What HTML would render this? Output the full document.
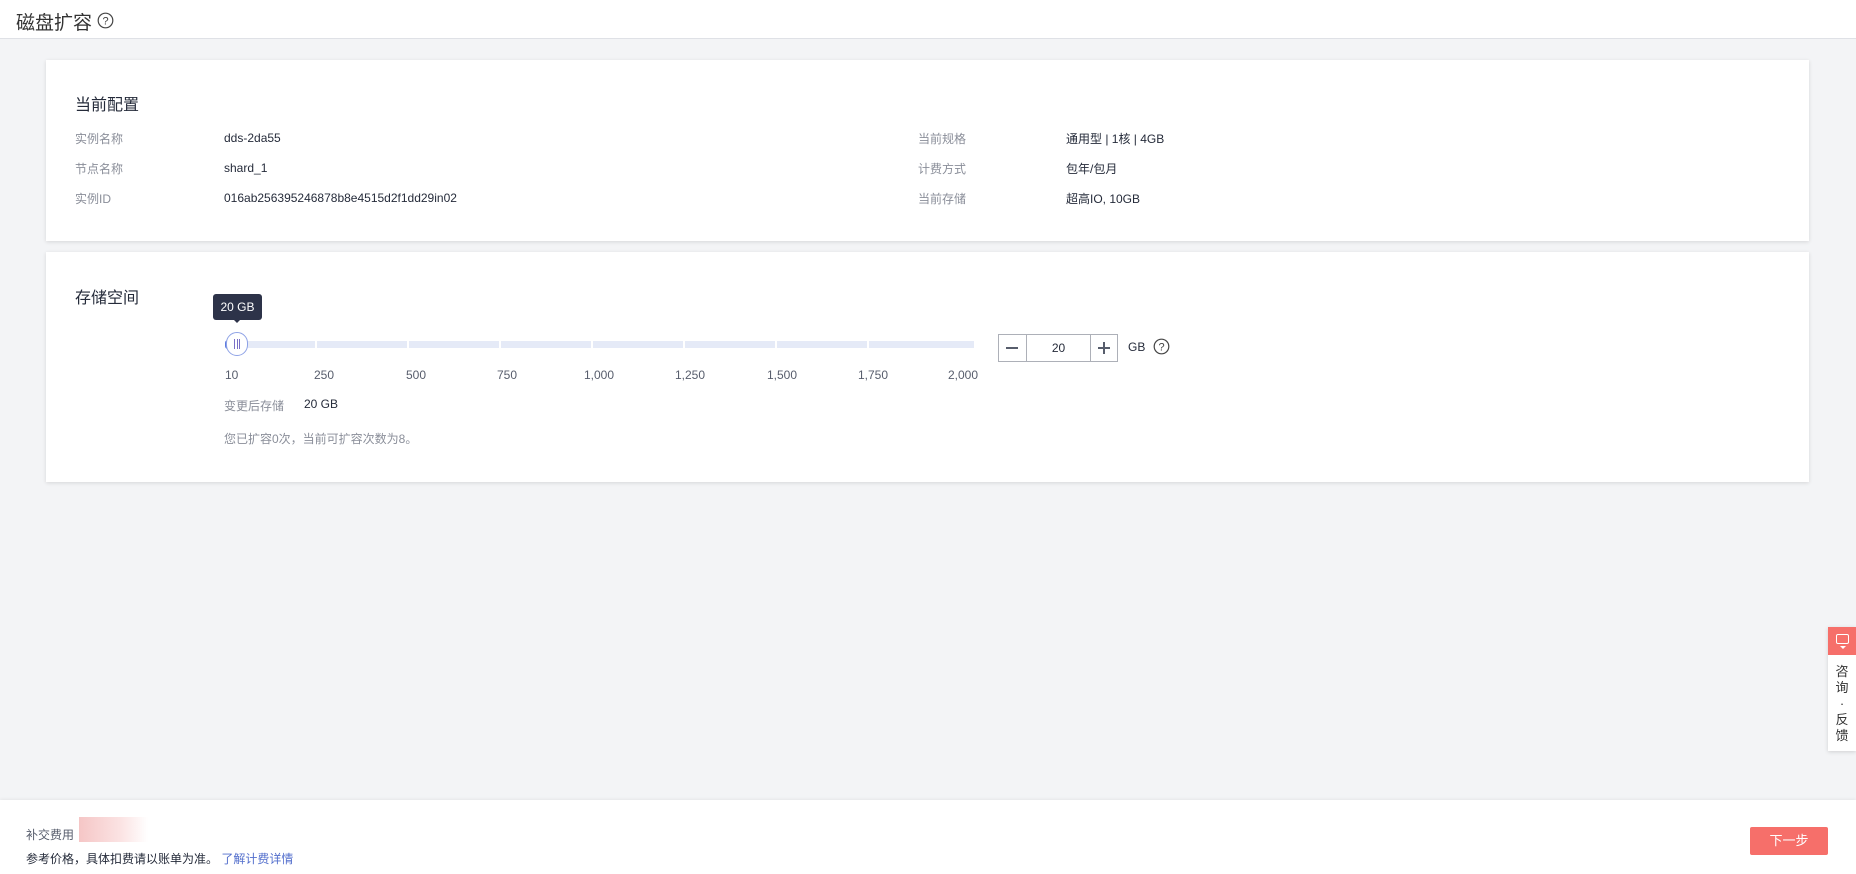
<!DOCTYPE html>
<html><head><meta charset="utf-8"><style>
*{margin:0;padding:0;box-sizing:border-box}
body{width:1856px;height:874px;background:#f3f4f6;font-family:"Liberation Sans","Noto Sans CJK SC",sans-serif;position:relative;overflow:hidden;color:#252b3a}
.a{position:absolute;white-space:nowrap}
.hdr{position:absolute;left:0;top:0;width:1856px;height:39px;background:#fff;border-bottom:1px solid #dfe1e6}
.card{position:absolute;left:46px;width:1763px;background:#fff;box-shadow:0 1px 4px rgba(0,0,0,.12)}
.lb{font-size:12px;color:#8a8e99}
.v{font-size:12px;color:#252b3a}
.tick{font-size:12px;color:#575d6c;top:368px}
.seg{position:absolute;top:341px;height:7px;background:#e5eaf7}
</style></head><body>
<div class="hdr"></div>
<div class="a" style="left:16px;top:8px;font-size:19px;color:#333">磁盘扩容</div>
<svg class="a" style="left:97px;top:12px" width="17" height="17" viewBox="0 0 17 17"><circle cx="8.5" cy="8.5" r="7.3" fill="none" stroke="#444" stroke-width="1.2"/><text x="8.5" y="12.5" font-size="11" text-anchor="middle" fill="#444" font-family="Liberation Sans">?</text></svg>

<div class="card" style="top:60px;height:181px"></div>
<div class="a" style="left:75px;top:91px;font-size:16px;color:#252b3a">当前配置</div>
<div class="a lb" style="left:75px;top:130px">实例名称</div>
<div class="a v" style="left:224px;top:131px">dds-2da55</div>
<div class="a lb" style="left:75px;top:160px">节点名称</div>
<div class="a v" style="left:224px;top:161px">shard_1</div>
<div class="a lb" style="left:75px;top:190px">实例ID</div>
<div class="a v" style="left:224px;top:191px">016ab256395246878b8e4515d2f1dd29in02</div>
<div class="a lb" style="left:918px;top:130px">当前规格</div>
<div class="a v" style="left:1066px;top:130px">通用型 | 1核 | 4GB</div>
<div class="a lb" style="left:918px;top:160px">计费方式</div>
<div class="a v" style="left:1066px;top:160px">包年/包月</div>
<div class="a lb" style="left:918px;top:190px">当前存储</div>
<div class="a v" style="left:1066px;top:190px">超高IO, 10GB</div>

<div class="card" style="top:252px;height:230px"></div>
<div class="a" style="left:75px;top:284px;font-size:16px;color:#252b3a">存储空间</div>
<div class="a" style="left:213px;top:294px;width:49px;height:26px;background:#2d3349;border-radius:3px;color:#fff;font-size:12px;text-align:center;line-height:26px">20 GB</div>
<div class="a" style="left:233px;top:319px;border:4px solid transparent;border-top-color:#2d3349"></div>
<div class="seg" style="left:225px;width:90px"></div>
<div class="seg" style="left:317px;width:90px"></div>
<div class="seg" style="left:409px;width:90px"></div>
<div class="seg" style="left:501px;width:90px"></div>
<div class="seg" style="left:593px;width:90px"></div>
<div class="seg" style="left:685px;width:90px"></div>
<div class="seg" style="left:777px;width:90px"></div>
<div class="seg" style="left:869px;width:105px"></div>
<div class="a" style="left:225px;top:340px;width:12px;height:9px;background:#5e7ce0;border-radius:3px 0 0 3px"></div>
<div class="a" style="left:226px;top:332px;width:22px;height:24px;background:#fff;border:1.5px solid #8ea2e6;border-radius:11px"></div>
<div class="a" style="left:234px;top:339px;width:6px;height:10px;border-left:1px solid #7a6fc7;border-right:1px solid #7a6fc7"></div>
<div class="a" style="left:236.5px;top:339px;width:1px;height:10px;background:#7a6fc7"></div>
<div class="a tick" style="left:225px">10</div>
<div class="a tick" style="left:314px">250</div>
<div class="a tick" style="left:406px">500</div>
<div class="a tick" style="left:497px">750</div>
<div class="a tick" style="left:584px">1,000</div>
<div class="a tick" style="left:675px">1,250</div>
<div class="a tick" style="left:767px">1,500</div>
<div class="a tick" style="left:858px">1,750</div>
<div class="a tick" style="left:948px">2,000</div>
<div class="a" style="left:998px;top:334px;width:120px;height:28px;border:1px solid #adb0b8;background:#fff"></div>
<div class="a" style="left:1026px;top:334px;width:1px;height:28px;background:#adb0b8"></div>
<div class="a" style="left:1090px;top:334px;width:1px;height:28px;background:#adb0b8"></div>
<div class="a" style="left:1006px;top:347px;width:12px;height:1.5px;background:#575d6c"></div>
<div class="a" style="left:1098px;top:347px;width:12px;height:1.5px;background:#575d6c"></div>
<div class="a" style="left:1103.3px;top:342px;width:1.5px;height:12px;background:#575d6c"></div>
<div class="a" style="left:1027px;top:341px;width:63px;text-align:center;font-size:12px">20</div>
<div class="a" style="left:1128px;top:340px;font-size:12px">GB</div>
<svg class="a" style="left:1153px;top:338px" width="17" height="17" viewBox="0 0 17 17"><circle cx="8.5" cy="8.5" r="7.3" fill="none" stroke="#444" stroke-width="1.2"/><text x="8.5" y="12.5" font-size="11" text-anchor="middle" fill="#444" font-family="Liberation Sans">?</text></svg>
<div class="a lb" style="left:224px;top:397px">变更后存储</div>
<div class="a v" style="left:304px;top:397px">20 GB</div>
<div class="a lb" style="left:224px;top:430px">您已扩容0次，当前可扩容次数为8。</div>

<div class="a" style="left:1828px;top:627px;width:28px;height:124px;background:#fff;box-shadow:0 1px 4px rgba(0,0,0,.15)"></div>
<div class="a" style="left:1828px;top:627px;width:28px;height:28px;background:#f66f6a"></div>
<div class="a" style="left:1836px;top:634px;width:13px;height:10px;border:1.3px solid #fff;border-radius:2px"></div>
<div class="a" style="left:1836.5px;top:646px;width:0;height:0;border:3px solid transparent;border-top-color:#fff;left:1839.5px"></div>
<div class="a" style="left:1834px;top:664px;width:16px;font-size:13px;line-height:16px;white-space:normal;color:#333;text-align:center">咨询·反馈</div>

<div class="a" style="left:0;top:800px;width:1856px;height:74px;background:#fff;box-shadow:0 -1px 3px rgba(0,0,0,.06)"></div>
<div class="a lb" style="left:26px;top:826px;color:#575d6c">补交费用</div>
<div class="a" style="left:79px;top:817px;width:69px;height:25px;background:linear-gradient(90deg,#f5c6c6,#fbe3e3 60%,#fff)"></div>
<div class="a v" style="left:26px;top:850px">参考价格，具体扣费请以账单为准。 <span style="color:#526ecc">了解计费详情</span></div>
<div class="a" style="left:1750px;top:827px;width:78px;height:28px;background:#f66f6a;border-radius:2px;color:#fff;font-size:13px;text-align:center;line-height:28px">下一步</div>
</body></html>
